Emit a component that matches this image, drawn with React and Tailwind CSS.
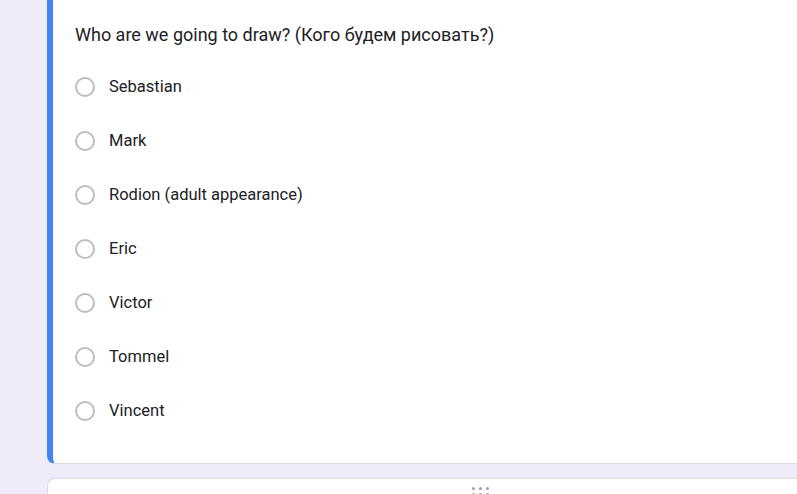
import React from 'react'

const OPTIONS = ['Sebastian', 'Mark', 'Rodion (adult appearance)', 'Eric', 'Victor', 'Tommel', 'Vincent']

function Radio({ label }) {
  return (
    <label className="flex items-center h-[54px] cursor-pointer">
      <span className="w-5 h-5 rounded-full border-2 border-[#bdbdbd] shrink-0" />
      <span className="ml-[14px] text-[16.5px] text-[#202124]">{label}</span>
    </label>
  )
}

export default function App() {
  return (
    <div className="w-[797px] h-[494px] overflow-hidden bg-[#f0ebf8] pl-[47px]" style={{ fontFamily: 'Roboto, "Liberation Sans", sans-serif' }}>
      <div className="bg-white border border-[#dadce0] border-t-0 border-r-0 border-l-[6px] border-l-[#4285f4] rounded-bl-lg pt-[23px] pb-[25px] pl-[22px]">
        <div className="text-[18px] leading-6 text-[#202124] mb-[13px]">Who are we going to draw? (Кого будем рисовать?)</div>
        <div className="flex flex-col">
          {OPTIONS.map(o => <Radio key={o} label={o} />)}
        </div>
      </div>
      <div className="mt-[14px] bg-white border border-[#dadce0] border-r-0 rounded-tl-lg h-10 flex justify-center pt-[8px]">
        <div className="grid grid-cols-3 gap-x-[4px] gap-y-[3px] h-fit ml-[116px]">
          {[0, 1, 2, 3, 4, 5].map(i => <span key={i} className="w-[3px] h-[3px] rounded-full bg-[#9aa0a6]" />)}
        </div>
      </div>
    </div>
  )
}
